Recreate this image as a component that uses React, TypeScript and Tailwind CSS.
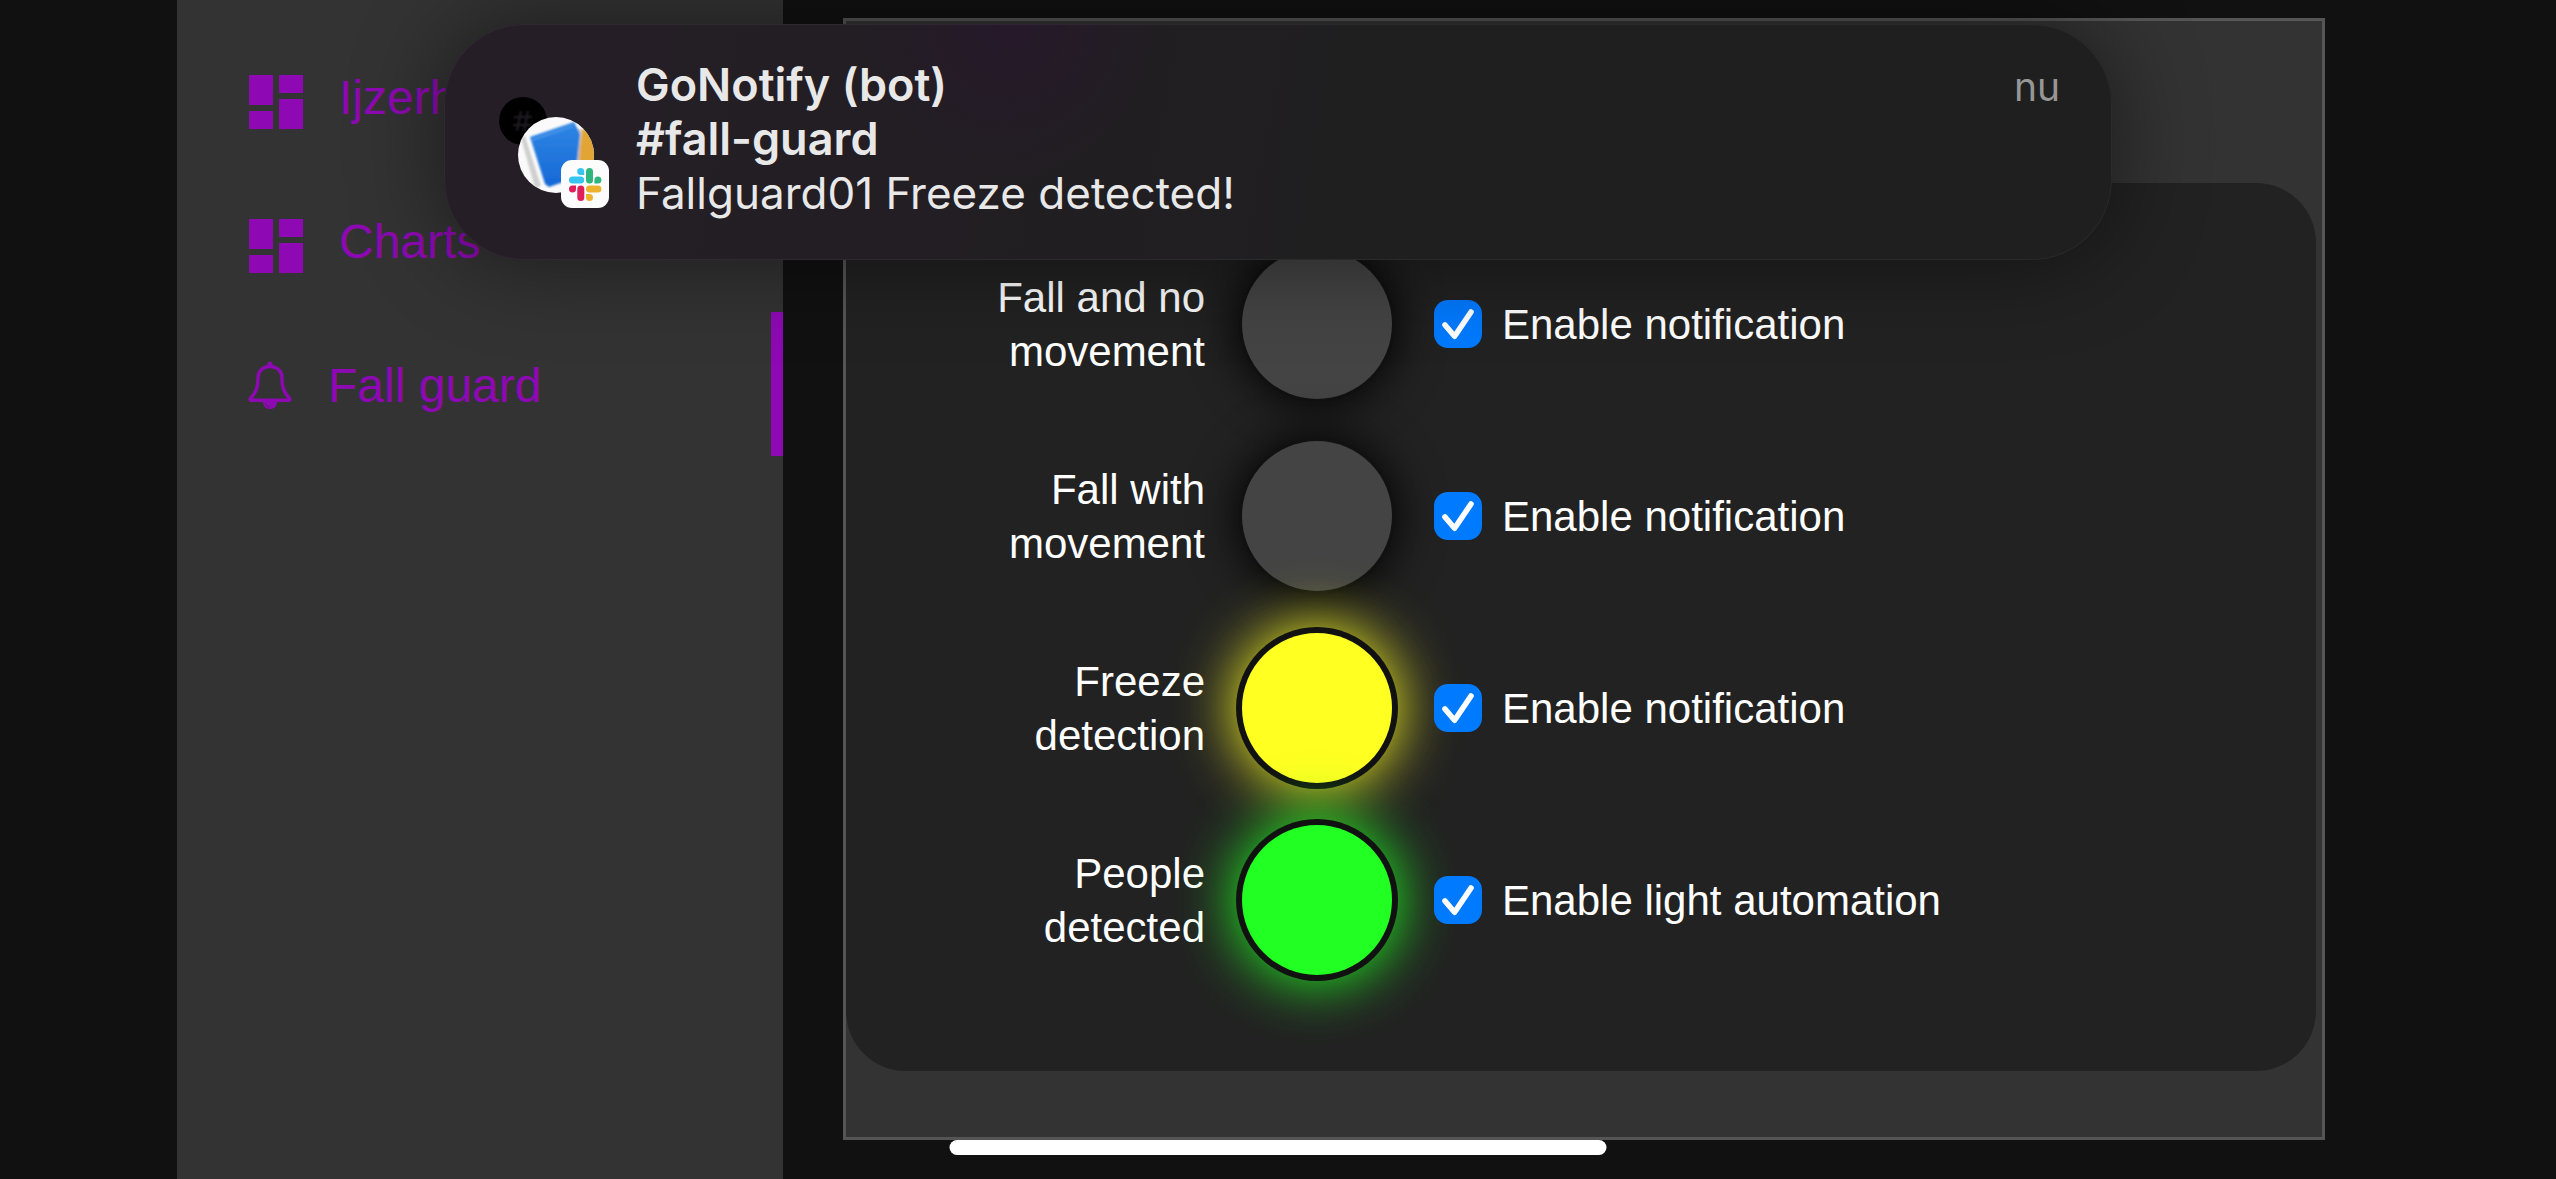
import React from "react";

type NavItem = { label: string; icon: "dashboard" | "bell"; active?: boolean };

const NAV: NavItem[] = [
  { label: "Ijzerhandel", icon: "dashboard" },
  { label: "Charts", icon: "dashboard" },
  { label: "Fall guard", icon: "bell", active: true },
];

type Lamp = "off" | "yellow" | "green";

const LAMPS: Record<Lamp, string> = {
  off: "bg-[#444444] shadow-[0_0_0_3px_#111111,0_0_48px_3px_#000000]",
  yellow: "bg-[#ffff22] shadow-[0_0_0_6px_#111111,0_0_60px_6px_#ffff22]",
  green: "bg-[#22ff22] shadow-[0_0_0_6px_#111111,0_0_60px_6px_#22ff22]",
};

const ROWS: { id: string; label: string; lamp: Lamp; option: string }[] = [
  { id: "fall-still", label: "Fall and no movement", lamp: "off", option: "Enable notification" },
  { id: "fall-moving", label: "Fall with movement", lamp: "off", option: "Enable notification" },
  { id: "freeze", label: "Freeze detection", lamp: "yellow", option: "Enable notification" },
  { id: "people", label: "People detected", lamp: "green", option: "Enable light automation" },
];

function DashboardIcon() {
  return (
    <svg viewBox="0 0 24 24" className="mt-3 size-[72px] shrink-0" fill="currentColor" aria-hidden="true">
      <path d="M3 13h8V3H3v10zm0 8h8v-6H3v6zm10 0h8V11h-8v10zm0-18v6h8V3h-8z" />
    </svg>
  );
}

function BellIcon() {
  return (
    <svg viewBox="0 0 44 48" className="ml-2 mt-0.5 h-12 w-11 shrink-0" fill="none" stroke="currentColor" strokeWidth="3.4" strokeLinejoin="round" aria-hidden="true">
      <path d="M22 5.500C14.500 5.500 10 10.500 10 17C10 26 8.500 31 2.500 37.500C1.800 38.500 2 39.300 3 39.300H41C42 39.300 42.200 38.500 41.500 37.500C35.500 31 34 26 34 17C34 10.500 29.500 5.500 22 5.500Z" />
      <path d="M19.500 5V2.500C19.500 .300 24.500 .300 24.500 2.500V5Z" fill="currentColor" stroke="none" />
      <path d="M15 41H29C29 45.500 26 48 22 48S15 45.500 15 41Z" fill="currentColor" stroke="none" />
      <path d="M17.500 42C18 44.500 19.500 45.800 22 46" stroke="#333333" strokeWidth="0.8" />
    </svg>
  );
}

function SlackBadge() {
  return (
    <svg viewBox="0 0 48 48" className="absolute right-0 bottom-0 size-12" aria-hidden="true">
      <rect width="48" height="48" rx="11" fill="#fcfcfc" />
      <g transform="translate(8 8)">
        <path d="M11.700 0a3.500 3.500 0 1 0 0 7h3.500V3.500A3.500 3.500 0 0 0 11.700 0z" fill="#36c5f0" />
        <rect x="0" y="8.600" width="15.200" height="7" rx="3.500" fill="#36c5f0" />
        <rect x="17" y="0" width="7" height="15.600" rx="3.500" fill="#2eb67d" />
        <path d="M32.400 12.100a3.500 3.500 0 1 0-7 0v3.500h3.500a3.500 3.500 0 0 0 3.500-3.500z" fill="#2eb67d" />
        <path d="M0 20.900a3.500 3.500 0 1 0 7 0v-3.500H3.500A3.500 3.500 0 0 0 0 20.900z" fill="#e01e5a" />
        <rect x="8.300" y="17.400" width="7" height="15.600" rx="3.500" fill="#e01e5a" />
        <rect x="17" y="17.400" width="15.400" height="7" rx="3.500" fill="#ecb22e" />
        <path d="M20.500 33a3.500 3.500 0 1 0 0-7H17v3.500a3.500 3.500 0 0 0 3.500 3.500z" fill="#ecb22e" />
      </g>
    </svg>
  );
}

function Avatar() {
  return (
    <div className="relative h-[112px] w-[110px] shrink-0">
      <svg viewBox="0 0 110 112" className="size-full" aria-hidden="true">
        <defs>
          <clipPath id="avatar-round">
            <circle cx="57" cy="59" r="38" />
          </clipPath>
          <linearGradient id="book-cover" x1="0" y1="0" x2="0" y2="1">
            <stop offset="0" stopColor="#2f86e4" />
            <stop offset="1" stopColor="#1668d6" />
          </linearGradient>
          <filter id="soften">
            <feGaussianBlur stdDeviation="0.8" />
          </filter>
        </defs>
        <circle cx="24" cy="25" r="24" fill="#000" />
        <g stroke="#241d26" strokeWidth="2" filter="url(#soften)">
          <path d="M22 15l-4 20M29 15l-4 20M15 21h18M14 29h18" />
        </g>
        <g clipPath="url(#avatar-round)">
          <rect x="19" y="21" width="76" height="76" fill="#fafafa" />
          <g filter="url(#soften)">
            <path d="M22 42L26 40L42 90L36 92Z" fill="#cfcfcf" />
            <path d="M83 32L100 44L94 78L78 78Z" fill="#e2a535" />
            <path d="M78 32L82 34L80 70L75 70Z" fill="#b9c3cc" />
            <path d="M31 41L75 26L81 38L76 82L50 91L46 88Z" fill="url(#book-cover)" />
            <path d="M33 44L74 30" stroke="#4f9bec" strokeWidth="1.500" />
          </g>
        </g>
      </svg>
      <SlackBadge />
    </div>
  );
}

function Notification() {
  return (
    <aside className="absolute top-6 left-1/2 flex h-[236px] w-[1668px] max-w-full -translate-x-1/2 items-start rounded-[80px] bg-[#1f1f1f] bg-[radial-gradient(circle_at_34%_0%,#26192a_0%,transparent_14%),linear-gradient(100deg,#261e27_0%,#221e23_30%,#1f1f1f_60%)] pt-[34px] pr-[52px] pl-[55px] font-[Inter,sans-serif] shadow-[0_0_90px_3px_rgba(0,0,0,0.45)] inset-ring inset-ring-white/5">
      <div className="pt-[38px]">
        <Avatar />
      </div>
      <div className="ml-[27px] min-w-0 flex-1 text-[44px] leading-[54px] text-[#e8e8e8]">
        <p className="text-[45px] font-semibold">GoNotify (bot)</p>
        <p className="text-[45px] font-semibold">#fall-guard</p>
        <p>Fallguard01 Freeze detected!</p>
      </div>
      <time className="pt-0.5 text-[39px] leading-[54px] text-[#969696]">nu</time>
    </aside>
  );
}

export default function App() {
  return (
    <div className="relative flex min-h-screen overflow-hidden bg-[#111111] px-[177px] font-['Liberation_Sans',Arial,sans-serif]">
      <nav className="w-[606px] shrink-0 bg-[#333333] pt-6">
        {NAV.map((item) => (
          <a
            key={item.label}
            href="#"
            className={`flex h-36 items-center border-r-12 pl-[63px] text-5xl text-[#8e09b4] ${item.active ? "border-[#8e09b4]" : "border-transparent"}`}
          >
            {item.icon === "dashboard" ? <DashboardIcon /> : <BellIcon />}
            <span className={item.icon === "dashboard" ? "ml-[27px] pt-1" : "ml-9 pt-1"}>{item.label}</span>
          </a>
        ))}
      </nav>

      <main className="flex min-w-0 flex-1 flex-col pt-[18px] pr-[54px] pb-[39px] pl-[60px]">
        <section className="flex flex-1 flex-col border-3 border-[#555555] bg-[#333333] pt-[162px] pr-1.5 pb-[66px]">
          <div className="flex-1 rounded-[60px] bg-[#222222] pt-[45px]">
            {ROWS.map((row) => (
              <div key={row.id} className="flex h-48 items-center text-[42px] leading-[54px] text-white">
                <p className="ml-[119px] w-60 pt-0.5 text-right">{row.label}</p>
                <div className={`relative ml-[37px] size-[150px] shrink-0 rounded-full ${LAMPS[row.lamp]}`} />
                <label className="ml-[42px] flex items-center gap-5">
                  <span className="relative flex size-12">
                    <input type="checkbox" defaultChecked className="peer size-12 appearance-none rounded-[14px] border-2 border-[#777777] checked:border-0 checked:bg-[#007aff]" />
                    <svg viewBox="0 0 48 48" className="pointer-events-none absolute inset-0 hidden size-12 peer-checked:block" fill="none" stroke="#fff" strokeWidth="5.6" strokeLinecap="round" strokeLinejoin="round" aria-hidden="true">
                      <path d="M11 25L20.600 36.200L37 12" />
                    </svg>
                  </span>
                  <span className="pt-0.5">{row.option}</span>
                </label>
              </div>
            ))}
          </div>
        </section>
      </main>

      <Notification />
      <div className="absolute bottom-6 left-1/2 h-[15px] w-[657px] -translate-x-1/2 rounded-full bg-white" />
    </div>
  );
}
